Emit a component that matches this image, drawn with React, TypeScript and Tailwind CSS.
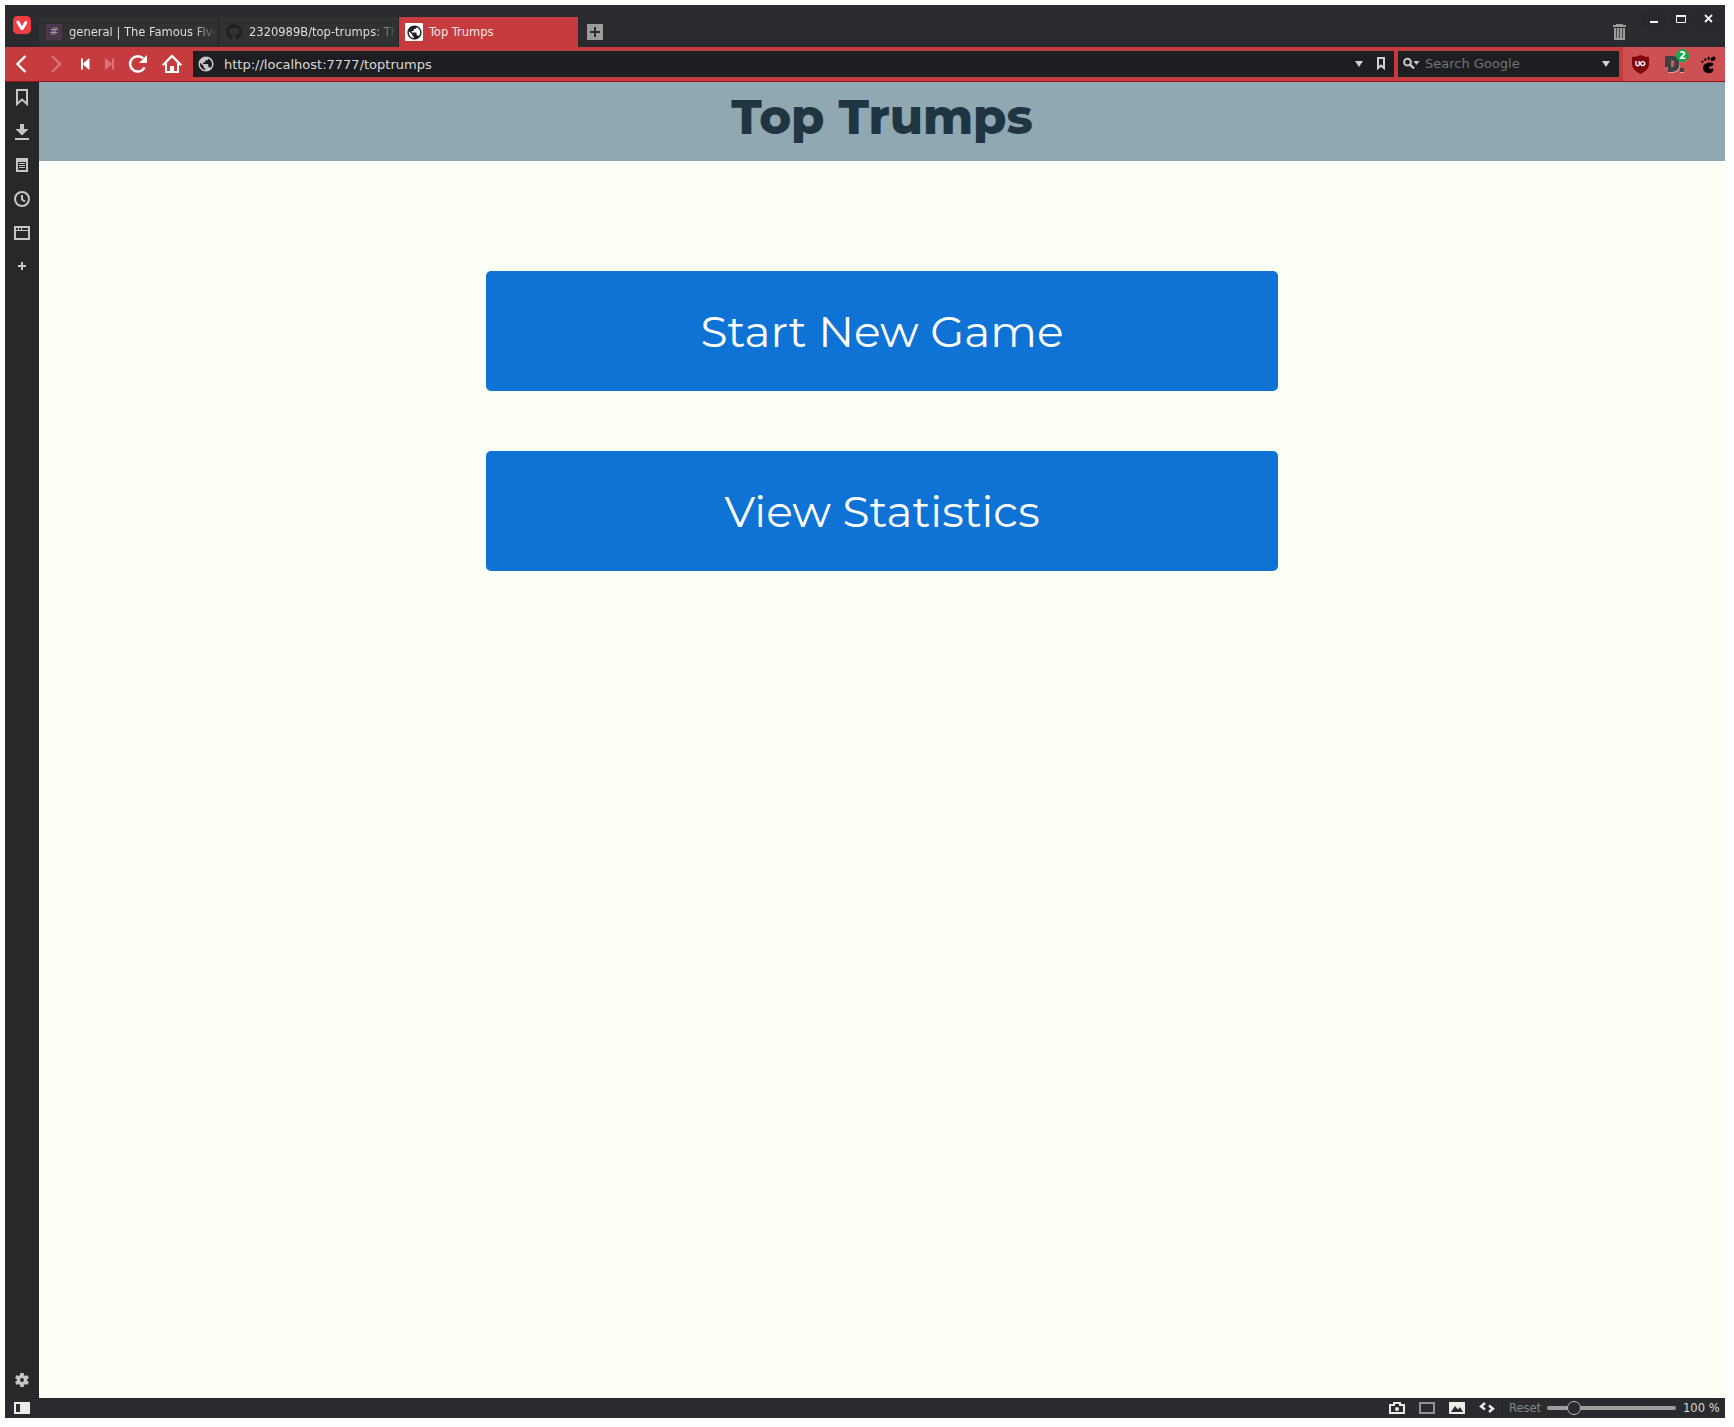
import React from "react";
import { FaGithub } from "react-icons/fa";
import { MdPublic } from "react-icons/md";

const ICON = "#c6c6c7";

function Svg({ w, h, children, className = "" }: { w: number; h: number; children: React.ReactNode; className?: string }) {
  return (
    <svg width={w} height={h} viewBox={`0 0 ${w} ${h}`} className={`shrink-0 ${className}`}>
      {children}
    </svg>
  );
}

function TabBar() {
  return (
    <div className="flex h-[42px] bg-[#2a2b2f]">
      <div className="w-[34px] pl-2 pt-[11px]">
        <Svg w={18} h={18}>
          <rect width="18" height="18" rx="4.5" fill="#ef3e42" />
          <path d="M4.9 6 L8.6 12.4 Q9 13 9.4 12.4 L12.8 6.6" fill="none" stroke="#fff" strokeWidth="3" strokeLinecap="round" strokeLinejoin="round" />
        </Svg>
      </div>
      <div className="mt-3 flex h-[30px] w-[180px] items-center border-r border-[#242528] bg-[#303133] pl-[7px] text-[12.8px] text-[#dcdcdc]">
        <span className="flex h-4 w-4 items-center justify-center bg-[#4b384b] text-[11px] text-[#a99aa9]">#</span>
        <span className="ml-[7px] w-[146px] overflow-hidden whitespace-nowrap [font-stretch:condensed] [mask-image:linear-gradient(to_right,#000_125px,transparent_148px)]">general | The Famous Five</span>
      </div>
      <div className="mt-3 flex h-[30px] w-[180px] items-center border-r border-[#242528] bg-[#303133] pl-[7px] text-[12.8px] text-[#dcdcdc]">
        <FaGithub size={16} color="#1d1e20" className="shrink-0" />
        <span className="ml-[7px] w-[146px] overflow-hidden whitespace-nowrap [font-stretch:condensed] [mask-image:linear-gradient(to_right,#000_125px,transparent_148px)]">2320989B/top-trumps: The</span>
      </div>
      <div className="mt-3 flex h-[30px] w-[179px] items-center bg-[#c63b3e] pl-[6px] text-[12.8px] text-[#f3e3e3]">
        <span className="flex h-[18px] w-[18px] items-center justify-center rounded-[1px] bg-white">
          <MdPublic size={17} color="#1d1e21" className="shrink-0" />
        </span>
        <span className="ml-[6px] whitespace-nowrap [font-stretch:condensed]">Top Trumps</span>
      </div>
      <Svg w={16} h={16} className="ml-[9px] mt-[19px]">
        <rect width="16" height="16" fill="#9c9c9c" />
        <path d="M3 8h10M8 3v10" stroke="#2a2b2f" strokeWidth="2" />
      </Svg>
      <div className="ml-auto flex">
        <Svg w={13} h={16} className="mr-[15px] mt-[19px]">
          <path d="M0 1h3V0h7v1h3v2H0zM1 4h11v12H1z" fill="#9c9c9c" />
          <path d="M3.5 4v10M6.5 4v10M9.5 4v10" stroke="#46474a" strokeWidth="1" />
        </Svg>
        <Svg w={84} h={42}>
          <path d="M0 5h25v20H0zM27 5h25v20H27zM54 5h25v20H54z" fill="#28292c" />
          <path d="M9 16h8v2H9z" fill="#f3f3f3" />
          <path d="M35.5 11v6.5h9V11" fill="none" stroke="#f3f3f3" />
          <path d="M35 10h10v2H35z" fill="#f3f3f3" />
          <path d="M64 10l7 7M71 10l-7 7" stroke="#f3f3f3" strokeWidth="1.8" />
        </Svg>
      </div>
    </div>
  );
}

function Toolbar() {
  return (
    <div className="flex h-[35px] border-b border-[#94131c] bg-[#c63b3e]">
      <Svg w={34} h={34}><path d="M20.5 9 L12.5 17 L20.5 25" fill="none" stroke="#fff" strokeWidth="2.4" /></Svg>
      <Svg w={34} h={34}><path d="M13 9 L21 17 L13 25" fill="none" stroke="#d87476" strokeWidth="2.4" /></Svg>
      <Svg w={25} h={34}><path d="M8 11.5h2v5L16.5 11v12L10 17.5v5H8z" fill="#fff" /></Svg>
      <Svg w={23} h={34}><path d="M16 11.5h-2v5L7 11v12l7-5.5v5h2z" fill="#d87476" /></Svg>
      <Svg w={34} h={34}>
        <path d="M23.6 20.5 A7.7 7.7 0 1 1 22.2 11.4" fill="none" stroke="#fff" strokeWidth="2.5" />
        <path d="M26 8v8h-8z" fill="#fff" />
      </Svg>
      <Svg w={34} h={34}>
        <path d="M7.8 18.2 L17 9 L26.2 18.2" fill="none" stroke="#fff" strokeWidth="2.3" />
        <path d="M10 17l2-2v9h3v-5h4v5h3v-9l2 2v9H10z" fill="#fff" />
      </Svg>
      <div className="ml-1 mt-1 flex h-[26px] w-[1201px] items-center bg-[#1d1e21] pl-[4px]">
        <MdPublic size={18} color={ICON} className="shrink-0" />
        <span className="ml-[9px] pt-[2px] text-[13px] text-[#dadada]">http://localhost:7777/toptrumps</span>
        <Svg w={42} h={26} className="ml-auto">
          <path d="M3 10h8l-4 6z" fill="#d0d0d0" />
          <path d="M26 7h6v10l-3-2.5-3 2.5z" fill="none" stroke="#d0d0d0" strokeWidth="2" />
        </Svg>
      </div>
      <div className="ml-1 mt-1 flex h-[26px] w-[221px] items-center bg-[#1d1e21]">
        <Svg w={27} h={26}>
          <circle cx="9.5" cy="11.2" r="3.4" fill="none" stroke={ICON} strokeWidth="2" />
          <path d="M12 13.5l4 4" stroke={ICON} strokeWidth="2.4" />
          <path d="M15.5 10h6l-3 4z" fill={ICON} />
        </Svg>
        <span className="text-[13px] text-[#757575]">Search Google</span>
        <Svg w={21} h={26} className="ml-auto"><path d="M4 10h8l-4 6z" fill="#d0d0d0" /></Svg>
      </div>
      <div className="ml-1 flex flex-1 bg-[#cd5052]">
        <Svg w={34} h={34}>
          <path d="M17.5 8 Q21 10 26 10 V17 Q26 23 17.5 27 Q9 23 9 17 V10 Q14 10 17.5 8Z" fill="#800610" />
          <path d="M13 14v3.2q0 1.6 1.6 1.6t1.6-1.6V14" fill="none" stroke="#fff" strokeWidth="1.4" />
          <circle cx="19.7" cy="16.6" r="2" fill="none" stroke="#fff" strokeWidth="1.4" />
        </Svg>
        <div className="relative h-[34px] w-[34px]">
          <Svg w={34} h={34}>
            <path d="M8 9h7.5C20 9 22.500 12 22.500 16.500S20 25 15 25h-4v-4.500H8zM14.500 13.500v7q3 0 3-3.500T14.500 13.500z" transform="translate(.6 1)" fill="#e7a3a4" fillRule="evenodd" />
            <path d="M8 9h7.5C20 9 22.500 12 22.500 16.500S20 25 15 25h-4v-4.500H8zM14.500 13.500v7q3 0 3-3.500T14.500 13.500z" fill="#3c4143" fillRule="evenodd" />
            <path d="M23 22h4v4h-4z" fill="#e7a3a4" />
            <path d="M23 21h4v4h-4z" fill="#3c4143" />
          </Svg>
          <span className="absolute left-[19px] top-[2px] flex h-[13px] w-[13px] items-center justify-center rounded-full bg-[#14a853] text-[10px] font-bold text-white">2</span>
        </div>
        <Svg w={34} h={34}>
          <g fill="#0b0304">
            <ellipse cx="22" cy="11.8" rx="2.7" ry="2" transform="rotate(-30 22 11.8)" />
            <ellipse cx="17.6" cy="11.4" rx="1.1" ry="1.8" transform="rotate(10 17.6 11.4)" />
            <ellipse cx="14.3" cy="12.6" rx="1" ry="1.5" />
            <ellipse cx="11.4" cy="14.8" rx=".9" ry="1.3" transform="rotate(-20 11.4 14.8)" />
            <path d="M12 20.5Q12.4 16.8 17 15.8Q22.2 14.6 22.5 17Q22.5 19 19.5 19.4Q17 19.8 18.2 21.2Q19.2 22.4 21.3 21.5Q22.8 21.2 22.4 23Q21.4 26.3 17.8 26.3Q12 25.8 12 20.5Z" />
          </g>
        </Svg>
      </div>
    </div>
  );
}

function SidePanel() {
  return (
    <div className="flex w-[34px] flex-col bg-[#27282a]">
      <Svg w={34} h={34}><path d="M12 8h10v14l-5-4.5-5 4.5z" fill="none" stroke={ICON} strokeWidth="2" /></Svg>
      <Svg w={34} h={34}><path d="M15 8h4v5h4.5L17 19.5 10.5 13H15zM10 22h14v2H10z" fill={ICON} /></Svg>
      <Svg w={34} h={34}>
        <path d="M11 8h12v14H11zM13 12v8h8v-8z" fill={ICON} fillRule="evenodd" />
        <path d="M14 13.5h6M14 15.5h6M14 17.5h6" stroke={ICON} />
      </Svg>
      <Svg w={34} h={34}>
        <circle cx="17" cy="15" r="7" fill="none" stroke={ICON} strokeWidth="2" />
        <path d="M17 11v4.5l3 2" fill="none" stroke={ICON} strokeWidth="2" />
      </Svg>
      <Svg w={34} h={34}>
        <path d="M9 8h16v14H9zM11 13v7h12v-7zM11 10v2h2v-2zM14 10v2h2v-2zM17 10v2h6v-2z" fill={ICON} fillRule="evenodd" />
      </Svg>
      <Svg w={34} h={34}><path d="M13 14h8M17 10v8" stroke={ICON} strokeWidth="2" /></Svg>
      <Svg w={34} h={34} className="mt-auto">
        <circle cx="17" cy="16" r="3.6" fill="none" stroke={ICON} strokeWidth="3.4" />
        <path d="M17 9v3M17 20v3M10.9 12.5l2.6 1.5M20.5 18l2.6 1.5M10.9 19.5l2.6-1.5M20.5 14l2.6-1.5" stroke={ICON} strokeWidth="3.6" />
      </Svg>
    </div>
  );
}

function StatusBar() {
  return (
    <div className="flex h-[20px] items-center border-t border-[#232427] bg-[#2a2b2f] pb-px text-[12.8px]">
      <Svg w={16} h={12} className="ml-[9px]">
        <path d="M0 0h16v12H0zM2 2v8h4V2z" fill="#ececec" fillRule="evenodd" />
      </Svg>
      <Svg w={106} h={12} className="ml-auto">
        <path d="M0 2h4V0h8v2h4v10H0zM2 4v6h12V4h-4V2H6v2z" fill="#ececec" fillRule="evenodd" />
        <circle cx="8" cy="7" r="2" fill="#ececec" />
        <path d="M31 1h14v10H31z" fill="none" stroke="#929292" strokeWidth="2" />
        <path d="M60 0h16v12H60zM62 10h12l-3-5-2 2.5L66 4z" fill="#ececec" fillRule="evenodd" />
        <path d="M96 1l-4 3.5 4 3M100 3.5l4 3.2-4 3.3" fill="none" stroke="#ececec" strokeWidth="2.4" />
      </Svg>
      <div className="ml-[7px] h-full w-px bg-[#232427]" />
      <span className="ml-[6px] w-[38px] text-[#85868a] [font-stretch:condensed]">Reset</span>
      <Svg w={129} h={16}>
        <rect y="6" width="129" height="4" rx="2" fill="#9d9d9d" />
        <circle cx="27" cy="8" r="6.5" fill="#2a2b2f" stroke="#b8b8b8" />
      </Svg>
      <span className="ml-[7px] w-[42px] whitespace-nowrap text-[#d8d8d8] [font-stretch:condensed]">100 %</span>
    </div>
  );
}

function MenuButton({ children }: { children: React.ReactNode }) {
  return (
    <button className="flex h-[120px] w-[792px] items-center justify-center rounded-[5px] bg-[#0e73d4] text-[44px] font-normal leading-[54px] text-white">
      {children}
    </button>
  );
}

export default function App() {
  return (
    <div className="h-[1427px] w-[1734px] bg-white pl-[5px] pt-[5px] font-['DejaVu_Sans',sans-serif]">
      <div className="flex h-[1413px] w-[1720px] flex-col">
        <TabBar />
        <Toolbar />
        <div className="flex min-h-0 flex-1">
          <SidePanel />
          <main className="flex flex-1 flex-col items-center bg-[#fcfff6] font-['Montserrat','Inter',sans-serif]">
            <header className="flex h-[79px] w-full justify-center bg-[#90a8b2] pt-[6px] text-[#1f3642]">
              <h1 className="text-[48px] font-extrabold leading-[58px]">Top Trumps</h1>
            </header>
            <div className="mt-[110px] flex flex-col gap-[60px]">
              <MenuButton>Start New Game</MenuButton>
              <MenuButton>View Statistics</MenuButton>
            </div>
          </main>
        </div>
        <StatusBar />
      </div>
    </div>
  );
}
